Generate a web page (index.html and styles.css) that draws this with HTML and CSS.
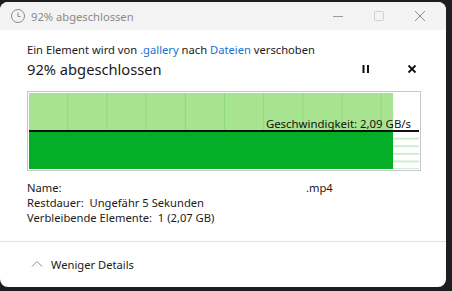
FILE: index.html
```html
<!DOCTYPE html>
<html lang="de">
<head>
    <meta charset="UTF-8">
    <title>92% abgeschlossen</title>
    <link rel="stylesheet" href="styles.css">
</head>
<body>
    <div class="window">
        <div class="titlebar">
            <svg class="clock" width="16" height="16" viewBox="0 0 16 16">
                <circle cx="8" cy="8" r="6.5" fill="none" stroke="#8a8a8a" stroke-width="1"/>
                <path d="M8 4.5 V8.5 H10.5" fill="none" stroke="#8a8a8a" stroke-width="1"/>
            </svg>
            <span class="title">92% abgeschlossen</span>
            <div class="controls">
                <span class="ctl"><svg width="12" height="12" viewBox="0 0 12 12"><path d="M1 6.5 H11" stroke="#9a9a9a" stroke-width="1"/></svg></span>
                <span class="ctl"><svg width="12" height="12" viewBox="0 0 12 12"><rect x="1.5" y="1.5" width="9" height="9" rx="1" fill="none" stroke="#cfcfcf" stroke-width="1"/></svg></span>
                <span class="ctl"><svg width="12" height="12" viewBox="0 0 12 12"><path d="M1 1 L11 11 M11 1 L1 11" stroke="#8a8a8a" stroke-width="1"/></svg></span>
            </div>
        </div>

        <div class="content">
            <div class="desc">Ein Element wird von <span class="link">.gallery</span> nach <span class="link">Dateien</span> verschoben</div>
            <div class="status">
                <span class="percent">92% abgeschlossen</span>
                <span class="btn"><svg width="10" height="10" viewBox="0 0 10 10"><rect x="1.5" y="1" width="2" height="8" fill="#111"/><rect x="6" y="1" width="2" height="8" fill="#111"/></svg></span>
                <span class="btn"><svg width="10" height="10" viewBox="0 0 10 10"><path d="M1.5 1.5 L8.5 8.5 M8.5 1.5 L1.5 8.5" stroke="#111" stroke-width="1.8"/></svg></span>
            </div>

            <div class="graph">
                <div class="plot">
                    <div class="upper">
                        <div class="grid"></div>
                    </div>
                    <div class="lower"></div>
                </div>
                <div class="rest">
                    <div class="rest-top"></div>
                    <div class="rest-bottom"></div>
                </div>
                <div class="speed">Geschwindigkeit: 2,09 GB/s</div>
            </div>

            <div class="details">
                <div class="row"><span class="label-name">Name:</span><span>.mp4</span></div>
                <div class="row">Restdauer:&nbsp; Ungefähr 5 Sekunden</div>
                <div class="row">Verbleibende Elemente:&nbsp; 1 (2,07 GB)</div>
            </div>
        </div>

        <div class="footer">
            <svg width="12" height="8" viewBox="0 0 12 8"><path d="M1 6.5 L6 1.5 L11 6.5" fill="none" stroke="#8a8a8a" stroke-width="1"/></svg>
            <span>Weniger Details</span>
        </div>
    </div>
</body>
</html>
```

FILE: styles.css
```css
body {
    margin: 0;
    padding: 0;
    background-color: #1e1e1e;
    font-family: "Noto Sans", "Open Sans", sans-serif;
    font-size: 11.2px;
    color: #1a1a1a;
    height: 291px;
    overflow: hidden;
}

.window {
    margin-top: 2px;
    width: 446px;
    height: 285px;
    background: white;
    border-radius: 8px;
    overflow: hidden;
    display: flex;
    flex-direction: column;
}

.titlebar {
    height: 28px;
    background-color: #f3f3f3;
    display: flex;
    align-items: center;
    padding-left: 10px;
}

.clock {
    margin-right: 5px;
}

.title {
    color: #8a8a8a;
    font-size: 11.2px;
    flex: 1;
}

.controls {
    display: flex;
    padding-right: 6px;
}

.ctl {
    width: 41px;
    height: 28px;
    display: flex;
    align-items: center;
    justify-content: center;
}

.content {
    padding: 12px 26px 0 27px;
    flex: 1;
}

.desc {
    line-height: 16px;
}

.link {
    color: #1a6fd0;
}

.status {
    display: flex;
    align-items: center;
    height: 22px;
    gap: 30px;
}

.percent {
    font-size: 14.7px;
    flex: 1;
}

.btn {
    width: 16px;
    display: flex;
    justify-content: center;
}

.graph {
    position: relative;
    margin-top: 11px;
    width: 390px;
    height: 76px;
    border: 1px solid #c8c8c8;
    padding: 1px;
    display: flex;
}

.plot {
    width: 364px;
    display: flex;
    flex-direction: column;
}

.upper {
    height: 37px;
    background-color: #a8e48f;
    border-bottom: 2px solid #111;
}

.grid {
    height: 100%;
    background-image: linear-gradient(to right, transparent 38px, #8fd878 38px, #8fd878 39px);
    background-size: 39.2px 100%;
}

.lower {
    flex: 1;
    background-color: #05ae27;
}

.rest {
    flex: 1;
    display: flex;
    flex-direction: column;
}

.rest-top {
    height: 37px;
    border-bottom: 2px solid #111;
}

.rest-bottom {
    flex: 1;
    background-image: linear-gradient(to bottom, transparent 6px, #cdeccd 6px, #cdeccd 7px);
    background-size: 100% 7.6px;
}

.speed {
    position: absolute;
    right: 9px;
    top: 24px;
    font-size: 11.4px;
    color: #111;
}

.details {
    margin-top: 9px;
    line-height: 15px;
}

.row {
    display: flex;
}

.label-name {
    width: 279px;
}

.footer {
    height: 44px;
    border-top: 1px solid #e3e3e3;
    display: flex;
    align-items: center;
    padding-left: 31px;
    gap: 8px;
    font-size: 11.2px;
    margin-bottom: 1px;
}
```
